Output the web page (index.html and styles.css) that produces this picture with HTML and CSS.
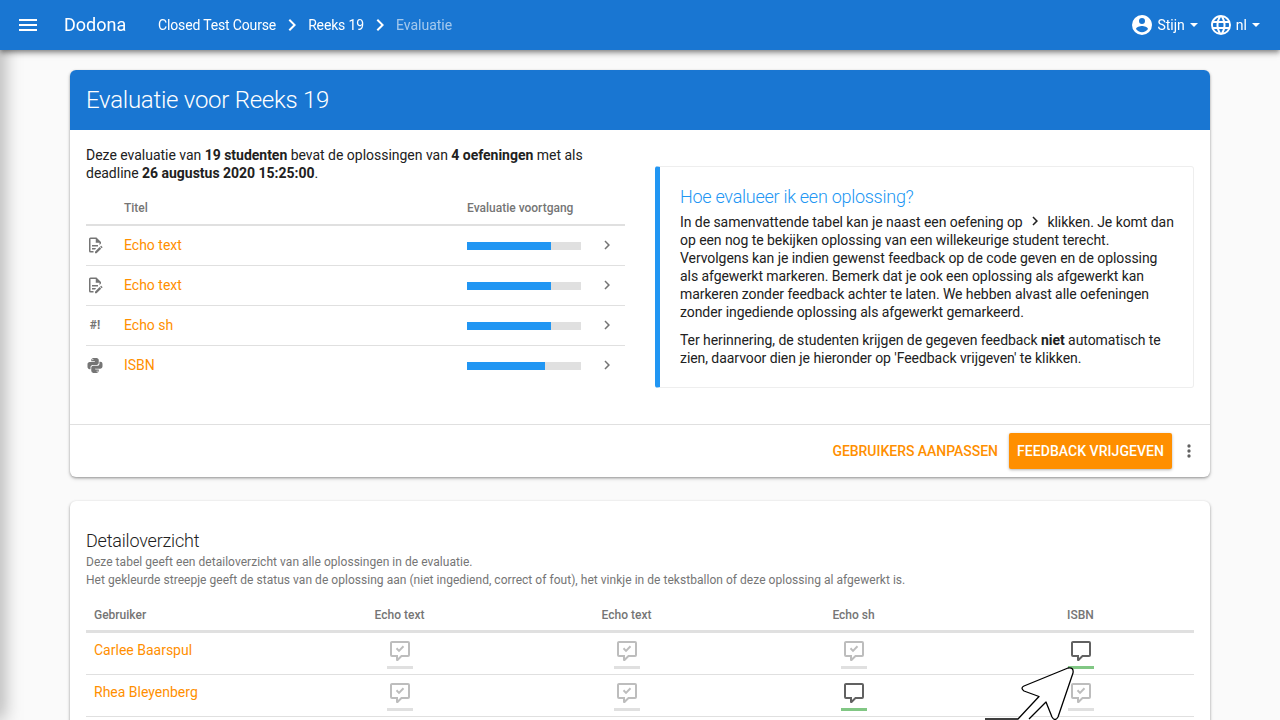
FILE: index.html
```html
<!DOCTYPE html>
<html lang="en">
<head>
    <title>Dodona</title>
    <link rel="stylesheet" href="styles.css">
</head>
<body>
    <svg class="defs" width="0" height="0">
        <symbol id="i-menu" viewBox="0 0 24 24"><path d="M3,6H21V8H3V6M3,11H21V13H3V11M3,16H21V18H3V16Z"/></symbol>
        <symbol id="i-chevron" viewBox="0 0 24 24"><path d="M8.59,16.58L13.17,12L8.59,7.41L10,6L16,12L10,18L8.59,16.58Z"/></symbol>
        <symbol id="i-account" viewBox="0 0 24 24"><path d="M12,19.2C9.5,19.2 7.29,17.92 6,16C6.03,14 10,12.9 12,12.9C14,12.9 17.97,14 18,16C16.71,17.92 14.5,19.2 12,19.2M12,5A3,3 0 0,1 15,8A3,3 0 0,1 12,11A3,3 0 0,1 9,8A3,3 0 0,1 12,5M12,2A10,10 0 0,0 2,12A10,10 0 0,0 12,22A10,10 0 0,0 22,12C22,6.47 17.5,2 12,2Z"/></symbol>
        <symbol id="i-web" viewBox="0 0 24 24"><path d="M16.36,14C16.44,13.34 16.5,12.68 16.5,12C16.5,11.32 16.44,10.66 16.36,10H19.74C19.9,10.64 20,11.31 20,12C20,12.69 19.9,13.36 19.74,14M14.59,19.56C15.19,18.45 15.65,17.25 15.97,16H18.92C17.96,17.65 16.43,18.93 14.59,19.56M14.34,14H9.66C9.56,13.34 9.5,12.68 9.5,12C9.5,11.32 9.56,10.65 9.66,10H14.34C14.43,10.65 14.5,11.32 14.5,12C14.5,12.68 14.43,13.34 14.34,14M12,19.96C11.17,18.76 10.5,17.43 10.09,16H13.91C13.5,17.43 12.83,18.76 12,19.96M8,8H5.08C6.03,6.34 7.57,5.06 9.4,4.44C8.8,5.55 8.35,6.75 8,8M5.08,16H8C8.35,17.25 8.8,18.45 9.4,19.56C7.57,18.93 6.03,17.65 5.08,16M4.26,14C4.1,13.36 4,12.69 4,12C4,11.31 4.1,10.64 4.26,10H7.64C7.56,10.66 7.5,11.32 7.5,12C7.5,12.68 7.56,13.34 7.64,14M12,4.03C12.83,5.23 13.5,6.57 13.91,8H10.09C10.5,6.57 11.17,5.23 12,4.03M18.92,8H15.97C15.65,6.75 15.19,5.55 14.59,4.44C16.43,5.07 17.96,6.34 18.92,8M12,2C6.47,2 2,6.5 2,12A10,10 0 0,0 12,22A10,10 0 0,0 22,12A10,10 0 0,0 12,2Z"/></symbol>
        <symbol id="i-dots" viewBox="0 0 24 24"><path d="M12,16A2,2 0 0,1 14,18A2,2 0 0,1 12,20A2,2 0 0,1 10,18A2,2 0 0,1 12,16M12,10A2,2 0 0,1 14,12A2,2 0 0,1 12,14A2,2 0 0,1 10,12A2,2 0 0,1 12,10M12,4A2,2 0 0,1 14,6A2,2 0 0,1 12,8A2,2 0 0,1 10,6A2,2 0 0,1 12,4Z"/></symbol>
        <symbol id="i-text" viewBox="0 0 24 24"><path d="M8,12H16V14H8V12M10,20H6V4H13V9H18V12.1L20,10.1V8L14,2H6A2,2 0 0,0 4,4V20A2,2 0 0,0 6,22H10V20M8,18H12.1L13,17.1V16H8V18M20.2,13C20.3,13 20.5,13.1 20.6,13.2L21.9,14.5C22.1,14.7 22.1,15.1 21.9,15.3L20.9,16.3L18.8,14.2L19.8,13.2C19.9,13.1 20,13 20.2,13M20.2,16.9L14.1,23H12V20.9L18.1,14.8L20.2,16.9Z"/></symbol>
        <symbol id="i-python" viewBox="0 0 24 24"><path d="M19.14,7.5A2.86,2.86 0 0,1 22,10.36V14.14A2.86,2.86 0 0,1 19.14,17H12C12,17.39 12.32,17.96 12.71,17.96H17V19.64A2.86,2.86 0 0,1 14.14,22.5H9.86A2.86,2.86 0 0,1 7,19.64V15.89C7,14.31 8.28,13.04 9.86,13.04H15.11C16.69,13.04 17.96,11.76 17.96,10.18V7.5H19.14M14.86,19.29C14.46,19.29 14.14,19.59 14.14,20.18C14.14,20.77 14.46,20.89 14.86,20.89A0.71,0.71 0 0,0 15.57,20.18C15.57,19.59 15.25,19.29 14.86,19.29M4.86,17.5C3.28,17.5 2,16.22 2,14.64V10.86C2,9.28 3.28,8 4.86,8H12C12,7.61 11.68,7.04 11.29,7.04H7V5.36C7,3.78 8.28,2.5 9.86,2.5H14.14C15.72,2.5 17,3.78 17,5.36V9.11C17,10.69 15.72,11.96 14.14,11.96H8.89C7.31,11.96 6.04,13.24 6.04,14.82V17.5H4.86M9.14,5.71C9.54,5.71 9.86,5.41 9.86,4.82C9.86,4.23 9.54,4.11 9.14,4.11C8.75,4.11 8.43,4.23 8.43,4.82C8.43,5.41 8.75,5.71 9.14,5.71Z"/></symbol>
        <symbol id="i-comment" viewBox="0 0 24 24"><path d="M9,22A1,1 0 0,1 8,21V18H4A2,2 0 0,1 2,16V4C2,2.89 2.9,2 4,2H20A2,2 0 0,1 22,4V16A2,2 0 0,1 20,18H13.9L10.2,21.71C10,21.9 9.75,22 9.5,22V22H9M10,16V19.08L13.08,16H20V4H4V16H10Z"/></symbol>
        <symbol id="i-comment-check" viewBox="0 0 24 24"><path d="M9,22A1,1 0 0,1 8,21V18H4A2,2 0 0,1 2,16V4C2,2.89 2.9,2 4,2H20A2,2 0 0,1 22,4V16A2,2 0 0,1 20,18H13.9L10.2,21.71C10,21.9 9.75,22 9.5,22V22H9M10,16V19.08L13.08,16H20V4H4V16H10Z"/><path d="M11,13.2L7.8,10L9.2,8.6L11,10.4L14.8,6.6L16.2,8Z"/></symbol>
    </svg>

    <div class="drawer-edge"></div>

    <header class="topbar">
        <svg class="icon menu-icon"><use href="#i-menu"/></svg>
        <span class="brand">Dodona</span>
        <nav class="crumbs">
            <a href="#">Closed Test Course</a>
            <svg class="icon"><use href="#i-chevron"/></svg>
            <a href="#">Reeks 19</a>
            <svg class="icon"><use href="#i-chevron"/></svg>
            <span class="crumb-current">Evaluatie</span>
        </nav>
        <div class="user-menu">
            <a href="#" class="user-link">
                <svg class="icon"><use href="#i-account"/></svg>
                <span>Stijn</span>
                <span class="caret"></span>
            </a>
            <a href="#" class="user-link">
                <svg class="icon"><use href="#i-web"/></svg>
                <span>nl</span>
                <span class="caret"></span>
            </a>
        </div>
    </header>

    <main class="container">
        <section class="card">
            <h1 class="card-title">Evaluatie voor Reeks 19</h1>
            <div class="summary">
                <div class="summary-left">
                    <p class="intro">Deze evaluatie van <b>19 studenten</b> bevat de oplossingen van <b>4 oefeningen</b> met als deadline <b>26 augustus 2020 15:25:00</b>.</p>
                    <table class="exercises">
                        <thead>
                            <tr>
                                <th class="col-type"></th>
                                <th class="col-title">Titel</th>
                                <th class="col-progress">Evaluatie voortgang</th>
                                <th class="col-next"></th>
                            </tr>
                        </thead>
                        <tbody>
                            <tr>
                                <td><svg class="type-icon"><use href="#i-text"/></svg></td>
                                <td><a href="#">Echo text</a></td>
                                <td><div class="progress"><div class="progress-bar" style="width: 73.7%"></div></div></td>
                                <td><svg class="next-icon"><use href="#i-chevron"/></svg></td>
                            </tr>
                            <tr>
                                <td><svg class="type-icon"><use href="#i-text"/></svg></td>
                                <td><a href="#">Echo text</a></td>
                                <td><div class="progress"><div class="progress-bar" style="width: 73.7%"></div></div></td>
                                <td><svg class="next-icon"><use href="#i-chevron"/></svg></td>
                            </tr>
                            <tr>
                                <td><span class="type-shell">#!</span></td>
                                <td><a href="#">Echo sh</a></td>
                                <td><div class="progress"><div class="progress-bar" style="width: 73.7%"></div></div></td>
                                <td><svg class="next-icon"><use href="#i-chevron"/></svg></td>
                            </tr>
                            <tr>
                                <td><svg class="type-icon"><use href="#i-python"/></svg></td>
                                <td><a href="#">ISBN</a></td>
                                <td><div class="progress"><div class="progress-bar" style="width: 68.4%"></div></div></td>
                                <td><svg class="next-icon"><use href="#i-chevron"/></svg></td>
                            </tr>
                        </tbody>
                    </table>
                </div>
                <aside class="callout">
                    <h4 class="callout-title">Hoe evalueer ik een oplossing?</h4>
                    <p>In de samenvattende tabel kan je naast een oefening op <svg class="inline-icon"><use href="#i-chevron"/></svg> klikken. Je komt dan op een nog te bekijken oplossing van een willekeurige student terecht. Vervolgens kan je indien gewenst feedback op de code geven en de oplossing als afgewerkt markeren. Bemerk dat je ook een oplossing als afgewerkt kan markeren zonder feedback achter te laten. We hebben alvast alle oefeningen zonder ingediende oplossing als afgewerkt gemarkeerd.</p>
                    <p>Ter herinnering, de studenten krijgen de gegeven feedback <b>niet</b> automatisch te zien, daarvoor dien je hieronder op 'Feedback vrijgeven' te klikken.</p>
                </aside>
            </div>
            <div class="card-actions">
                <a href="#" class="btn-text">Gebruikers aanpassen</a>
                <a href="#" class="btn-filled">Feedback vrijgeven</a>
                <svg class="dots-icon"><use href="#i-dots"/></svg>
            </div>
        </section>

        <section class="card card-details">
            <h2 class="details-title">Detailoverzicht</h2>
            <p class="details-help">Deze tabel geeft een detailoverzicht van alle oplossingen in de evaluatie.<br>Het gekleurde streepje geeft de status van de oplossing aan (niet ingediend, correct of fout), het vinkje in de tekstballon of deze oplossing al afgewerkt is.</p>
            <table class="details">
                <thead>
                    <tr>
                        <th class="col-user">Gebruiker</th>
                        <th>Echo text</th>
                        <th>Echo text</th>
                        <th>Echo sh</th>
                        <th>ISBN</th>
                    </tr>
                </thead>
                <tbody>
                    <tr>
                        <td class="col-user"><a href="#">Carlee Baarspul</a></td>
                        <td><div class="status done"><svg><use href="#i-comment-check"/></svg><span class="status-line"></span></div></td>
                        <td><div class="status done"><svg><use href="#i-comment-check"/></svg><span class="status-line"></span></div></td>
                        <td><div class="status done"><svg><use href="#i-comment-check"/></svg><span class="status-line"></span></div></td>
                        <td><div class="status todo"><svg><use href="#i-comment"/></svg><span class="status-line"></span></div></td>
                    </tr>
                    <tr>
                        <td class="col-user"><a href="#">Rhea Bleyenberg</a></td>
                        <td><div class="status done"><svg><use href="#i-comment-check"/></svg><span class="status-line"></span></div></td>
                        <td><div class="status done"><svg><use href="#i-comment-check"/></svg><span class="status-line"></span></div></td>
                        <td><div class="status todo"><svg><use href="#i-comment"/></svg><span class="status-line"></span></div></td>
                        <td><div class="status done"><svg><use href="#i-comment-check"/></svg><span class="status-line"></span></div></td>
                    </tr>
                </tbody>
            </table>
        </section>
    </main>

    <!-- arrow drawn over the page to point at the first open solution -->
    <svg class="pointer" viewBox="0 0 100 60" width="100" height="60">
        <path d="M0,59H33L54,36.5L39,31Q35,28 39,26L83,8Q89,7 88,13L73,57Q70,62 67,57L61,42L44,59" />
    </svg>
</body>
</html>
```

FILE: styles.css
```css
html, body {
    height: 100%;
    overflow: hidden;
}
body {
    font-family: 'Roboto', sans-serif;
    font-size: 14px;
    line-height: 18px;
    margin: 0;
    background-color: #fafafa;
    color: #212121;
}
a {
    text-decoration: none;
}
.defs {
    position: absolute;
}
.icon {
    width: 24px;
    height: 24px;
    fill: currentColor;
    flex: none;
}

/* Top bar */
.topbar {
    position: relative;
    z-index: 2;
    display: flex;
    align-items: center;
    height: 50px;
    padding: 0 16px;
    background-color: #1976d2;
    color: white;
    box-shadow: 0 2px 4px -1px rgba(0, 0, 0, 0.3), 0 4px 5px rgba(0, 0, 0, 0.2), 0 1px 10px rgba(0, 0, 0, 0.15);
}
.brand {
    font-size: 18px;
    margin-left: 24px;
    width: 94px;
}
.crumbs {
    display: flex;
    align-items: center;
    gap: 4px;
}
.crumbs a {
    color: white;
    letter-spacing: -0.15px;
}
.crumb-current {
    color: rgba(255, 255, 255, 0.6);
}
.user-menu {
    display: flex;
    gap: 11px;
    margin-left: auto;
    margin-right: 4px;
}
.user-link {
    display: flex;
    align-items: center;
    gap: 3px;
    color: white;
}
.caret {
    width: 0;
    height: 0;
    margin-left: 2px;
    border-left: 4px solid transparent;
    border-right: 4px solid transparent;
    border-top: 4px solid white;
}
.drawer-edge {
    position: fixed;
    top: 0;
    bottom: 0;
    left: -10px;
    width: 10px;
    box-shadow: 0 0 20px rgba(0, 0, 0, 0.55);
}

/* Cards */
.container {
    width: 1140px;
    margin: 0 auto;
    padding-top: 20px;
}
.card {
    background-color: white;
    border-radius: 6px;
    margin-bottom: 24px;
    box-shadow: 0 1px 3px rgba(0, 0, 0, 0.2), 0 1px 2px rgba(0, 0, 0, 0.14), 0 2px 4px rgba(0, 0, 0, 0.12);
    overflow: hidden;
}
.card-title {
    margin: 0;
    height: 60px;
    padding: 0 16px;
    font-size: 24px;
    font-weight: 300;
    line-height: 60px;
    letter-spacing: -0.26px;
    background-color: #1976d2;
    color: white;
}
.summary {
    display: grid;
    grid-template-columns: 1fr 1fr;
    gap: 30px;
    height: 295px;
    padding: 16px 16px 0;
    box-sizing: border-box;
    border-bottom: 1px solid #e0e0e0;
}
.intro {
    margin: 0 0 8px;
    letter-spacing: -0.02px;
}

/* Exercise table */
.exercises {
    width: 100%;
    border-collapse: collapse;
    table-layout: fixed;
}
.exercises th {
    height: 32px;
    padding: 2px 0 0;
    font-size: 12px;
    font-weight: 500;
    text-align: left;
    color: #757575;
    border-bottom: 2px solid #e0e0e0;
}
.col-type {
    width: 38px;
}
.col-progress {
    width: 114px;
}
.col-next {
    width: 44px;
}
.exercises .col-title {
    width: auto;
}
.exercises td {
    height: 38px;
    padding: 0 0 1px;
    border-bottom: 1px solid #e0e0e0;
}
.exercises tr:last-child td {
    border-bottom: none;
}
.exercises a {
    color: #ff8f00;
}
.type-icon {
    display: block;
    width: 18px;
    height: 18px;
    fill: #757575;
}
.type-shell {
    display: block;
    width: 18px;
    font-size: 12px;
    font-weight: 700;
    text-align: center;
    color: #757575;
}
.progress {
    height: 8px;
    margin-top: 1px;
    background-color: #e0e0e0;
}
.progress-bar {
    height: 100%;
    background-color: #2196f3;
}
.next-icon {
    display: block;
    width: 18px;
    height: 18px;
    margin: 0 0 1px 17px;
    fill: #757575;
}

/* Help callout */
.callout {
    align-self: start;
    box-sizing: border-box;
    height: 222px;
    margin-top: 20px;
    padding: 19px 19px 0 20px;
    border: 1px solid #eeeeee;
    border-left: 5px solid #2196f3;
    border-radius: 3px;
    letter-spacing: -0.06px;
}
.callout-title {
    margin: 0 0 4px;
    font-size: 18px;
    font-weight: 300;
    line-height: 22px;
    letter-spacing: -0.27px;
    color: #2196f3;
}
.callout p {
    margin: 0 0 10px;
}
.inline-icon {
    width: 18px;
    height: 18px;
    vertical-align: -3px;
    fill: #212121;
}

/* Card footer */
.card-actions {
    display: flex;
    align-items: center;
    justify-content: flex-end;
    height: 52px;
    padding-right: 11px;
    font-weight: 500;
    text-transform: uppercase;
}
.btn-text {
    margin-right: 11px;
    letter-spacing: -0.03px;
    color: #ff8f00;
}
.btn-filled {
    padding: 9px 8px;
    border-radius: 2px;
    letter-spacing: 0.05px;
    background-color: #ff8f00;
    color: white;
    box-shadow: 0 1px 3px rgba(0, 0, 0, 0.3);
}
.dots-icon {
    width: 20px;
    height: 20px;
    margin-left: 7px;
    fill: #616161;
}

/* Details table */
.card-details {
    padding: 28px 16px 40px;
}
.details-title {
    margin: 0;
    font-size: 18px;
    font-weight: 300;
    line-height: 24px;
    letter-spacing: -0.2px;
}
.details-help {
    margin: 0 0 8px;
    font-size: 12px;
    letter-spacing: 0.035px;
    color: #757575;
}
.details {
    width: 100%;
    border-collapse: collapse;
    table-layout: fixed;
}
.details th {
    height: 31px;
    padding: 2px 0 0;
    font-size: 12px;
    font-weight: 500;
    color: #757575;
    border-bottom: 3px solid #e0e0e0;
}
.details td {
    height: 41px;
    padding: 0;
    border-bottom: 1px solid #e0e0e0;
}
.details th.col-user {
    width: 192px;
    padding-left: 8px;
    text-align: left;
}
.details td.col-user {
    padding: 8px 0 0 8px;
    height: 33px;
    vertical-align: top;
}
.details a {
    color: #ff8f00;
}
.status {
    display: flex;
    flex-direction: column;
    align-items: center;
}
.status svg {
    width: 24px;
    height: 24px;
    fill: #616161;
}
.status-line {
    width: 26px;
    height: 3px;
    margin-top: 3px;
    background-color: #81c784;
}
.status.done svg {
    fill: #bdbdbd;
}
.status.done .status-line {
    background-color: #e0e0e0;
}

/* Arrow overlay */
.pointer {
    position: absolute;
    left: 985px;
    top: 660px;
    overflow: hidden;
}
.pointer path {
    fill: white;
    stroke: black;
    stroke-width: 1.3;
    stroke-linejoin: round;
}
```
